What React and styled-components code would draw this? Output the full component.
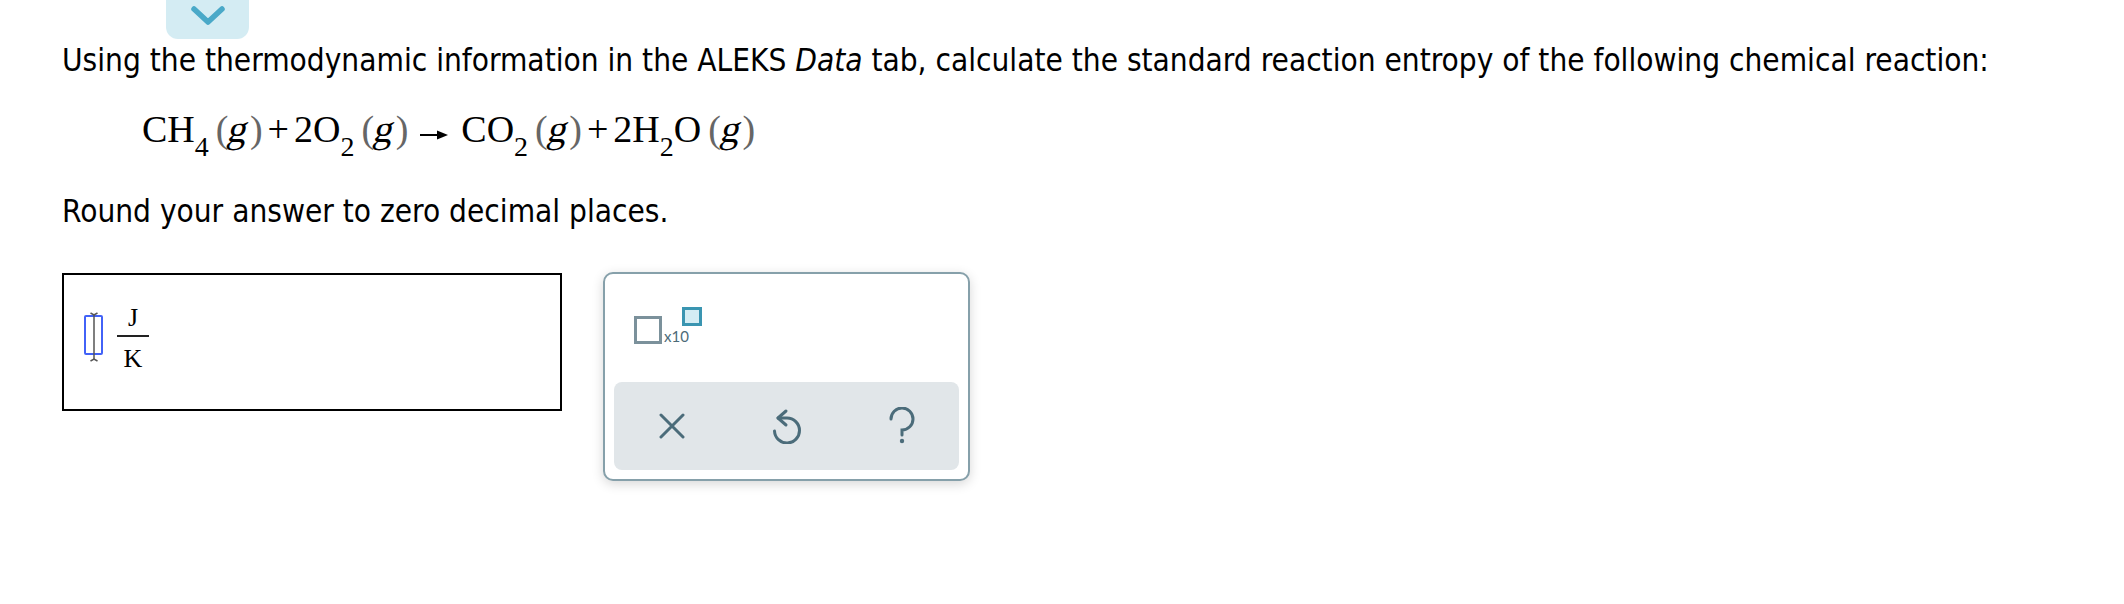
import React from 'react';
import styled, { createGlobalStyle } from 'styled-components';

const GlobalStyle = createGlobalStyle`
    html, body {
        margin: 0;
        padding: 0;
        background: #ffffff;
    }
    body {
        font-family: 'DejaVu Sans', Verdana, sans-serif;
        color: #000;
    }
`;

const Page = styled.div`
    width: 2124px;
    height: 604px;
    box-sizing: border-box;
    padding-left: 62px;
    overflow: hidden;
`;

const Tab = styled.div`
    width: 83px;
    height: 39px;
    margin-left: 104px;
    box-sizing: border-box;
    padding-top: 5px;
    display: flex;
    justify-content: center;
    align-items: flex-start;
    background: #d4ecf3;
    border-radius: 0 0 12px 12px;
`;

const Text = styled.p`
    margin: ${(p) => p.$top}px 0 0;
    font-family: 'DejaVu Sans Condensed', 'DejaVu Sans', sans-serif;
    font-stretch: condensed;
    font-size: 31.3px;
    line-height: 36px;
    white-space: nowrap;
    color: #000;
`;

const Formula = styled.div`
    margin: 29px 0 0 80px;
    font-family: 'Liberation Serif', 'Times New Roman', serif;
    font-size: 38px;
    line-height: 44px;
    white-space: nowrap;
    color: #000;
`;

const Sub = styled.span`
    font-size: 28px;
    line-height: 0;
    vertical-align: -14px;
`;

const Phase = styled.span`
    margin-left: 7px;
`;

const Paren = styled.span`
    color: #666;
`;

const Gas = styled.span`
    display: inline-block;
    margin: 0 1px;
    font-size: 39px;
    line-height: 0;
    transform: skewX(-13deg);
`;

const Op = styled.span`
    margin: 0 5px;
`;

const Arrow = styled.svg`
    margin: 0 13px 0 12px;
    vertical-align: 2px;
`;

const AnswerRow = styled.div`
    display: flex;
    align-items: flex-start;
    gap: 41px;
    margin-top: 44px;
`;

const AnswerBox = styled.div`
    width: 500px;
    height: 138px;
    box-sizing: border-box;
    border: 2px solid #000;
    padding: 30px 0 0 20px;
    display: flex;
    align-items: flex-start;
    gap: 14px;
`;

const Cursor = styled.div`
    position: relative;
    width: 19px;
    height: 40px;
    margin-top: 10px;
    box-sizing: border-box;
    border: 2px solid #4262f7;
    border-radius: 2px;

    svg {
        position: absolute;
        left: 50%;
        top: -5px;
        transform: translateX(-50%);
    }
`;

const Fraction = styled.div`
    display: flex;
    flex-direction: column;
    align-items: center;
    width: 32px;
    font-family: 'Liberation Serif', 'Times New Roman', serif;
    font-size: 26px;
    line-height: 26px;
`;

const FractionBar = styled.div`
    width: 32px;
    height: 2px;
    margin: 4px 0 9px;
    background: #222;
`;

const Panel = styled.div`
    width: 367px;
    height: 209px;
    margin-top: -1px;
    box-sizing: border-box;
    padding: 9px;
    border: 2px solid #86a0aa;
    border-radius: 10px;
    background: #fff;
    box-shadow: 0 3px 12px rgba(0, 0, 0, 0.16);
    display: flex;
    flex-direction: column;
`;

const Templates = styled.div`
    flex: 1;
    padding: 24px 0 0 20px;
`;

const SciButton = styled.div`
    display: inline-flex;
    align-items: flex-end;
`;

const BigSquare = styled.div`
    width: 28px;
    height: 28px;
    box-sizing: border-box;
    border: 3px solid #7b919b;
`;

const Power = styled.div`
    display: flex;
    flex-direction: column;
    margin-left: 2px;
`;

const SmallSquare = styled.div`
    width: 20px;
    height: 19px;
    margin-left: 18px;
    box-sizing: border-box;
    border: 3px solid #3a95b1;
    background: #d4edf4;
`;

const Times10 = styled.span`
    margin-top: 2px;
    font-family: Lato, 'Open Sans', sans-serif;
    font-size: 15px;
    line-height: 16px;
    color: #4d6b78;
`;

const ButtonBar = styled.div`
    height: 88px;
    display: grid;
    grid-template-columns: repeat(3, 1fr);
    align-items: center;
    justify-items: center;
    background: #e1e6e9;
    border-radius: 8px;
`;

const IconButton = styled.button`
    display: flex;
    align-items: center;
    justify-content: center;
    padding: 0;
    border: none;
    background: none;
    color: #4b6c7a;
    cursor: pointer;
`;

const Chevron = () => (
    <svg width="36" height="22" viewBox="0 0 36 22">
        <polyline points="4,4 18,17 32,4" fill="none" stroke="#4aa9c8" strokeWidth="5.5" strokeLinecap="round" strokeLinejoin="round" />
    </svg>
);

const IBeam = () => (
    <svg width="9" height="50" viewBox="0 0 9 50">
        <g stroke="#555" strokeWidth="1.5" fill="none">
            <line x1="4.5" y1="2" x2="4.5" y2="48" />
            <path d="M1 1 L4.5 3 L8 1" />
            <path d="M1 49 L4.5 47 L8 49" />
        </g>
    </svg>
);

const Species = ({ parts }) => (
    <>
        {parts.map((p, i) => (p.sub ? <Sub key={i}>{p.sub}</Sub> : <span key={i}>{p.t}</span>))}
        <Phase>
            <Paren>(</Paren>
            <Gas>g</Gas>
            <Paren>)</Paren>
        </Phase>
    </>
);

const App = () => {
    return (
        <Page>
            <GlobalStyle />
            <Tab>
                <Chevron />
            </Tab>

            <Text $top={3}>
                Using the thermodynamic information in the ALEKS <i>Data</i> tab, calculate the standard reaction entropy of the following chemical reaction:
            </Text>

            {/* reaction */}
            <Formula>
                <Species parts={[{ t: 'CH' }, { sub: '4' }]} />
                <Op>+</Op>
                <Species parts={[{ t: '2O' }, { sub: '2' }]} />
                <Arrow width="28" height="10" viewBox="0 0 28 10">
                    <line x1="0" y1="5" x2="20" y2="5" stroke="#000" strokeWidth="2" />
                    <polygon points="17,0.5 28,5 17,9.5" fill="#000" />
                </Arrow>
                <Species parts={[{ t: 'CO' }, { sub: '2' }]} />
                <Op>+</Op>
                <Species parts={[{ t: '2H' }, { sub: '2' }, { t: 'O' }]} />
            </Formula>

            <Text $top={42}>Round your answer to zero decimal places.</Text>

            <AnswerRow>
                <AnswerBox>
                    <Cursor>
                        <IBeam />
                    </Cursor>
                    <Fraction>
                        <span>J</span>
                        <FractionBar />
                        <span>K</span>
                    </Fraction>
                </AnswerBox>

                <Panel>
                    <Templates>
                        <SciButton>
                            <BigSquare />
                            <Power>
                                <SmallSquare />
                                <Times10>x10</Times10>
                            </Power>
                        </SciButton>
                    </Templates>
                    <ButtonBar>
                        <IconButton aria-label="clear">
                            <svg width="26" height="26" viewBox="0 0 26 26">
                                <path d="M2 2 L24 24 M24 2 L2 24" stroke="currentColor" strokeWidth="3" strokeLinecap="round" />
                            </svg>
                        </IconButton>
                        <IconButton aria-label="undo">
                            <svg width="30" height="36" viewBox="0 0 30 36">
                                <g fill="none" stroke="currentColor" strokeWidth="3" strokeLinecap="round" strokeLinejoin="round">
                                    <path d="M14 3 L6 10 L14 17" />
                                    <path d="M6 10 H15 A12.5 12.5 0 1 1 2.5 23" />
                                </g>
                            </svg>
                        </IconButton>
                        <IconButton aria-label="help">
                            <svg width="28" height="38" viewBox="0 0 28 38">
                                <path d="M3 12 A11 11 0 1 1 14 23 V28" fill="none" stroke="currentColor" strokeWidth="3" strokeLinecap="round" />
                                <circle cx="14" cy="34" r="2.2" fill="currentColor" />
                            </svg>
                        </IconButton>
                    </ButtonBar>
                </Panel>
            </AnswerRow>
        </Page>
    );
};

export default App;
